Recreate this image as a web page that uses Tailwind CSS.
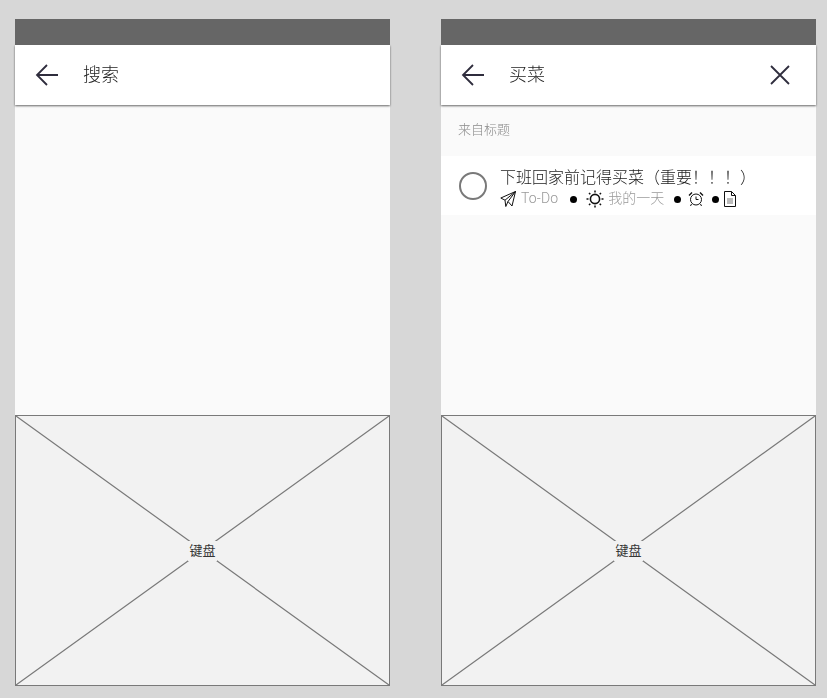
<!DOCTYPE html>
<html lang="zh">

<head>
    <meta charset="UTF-8">
    <meta name="viewport" content="width=device-width, initial-scale=1.0">
    <title>搜索</title>
    <script src="https://cdn.jsdelivr.net/npm/@tailwindcss/browser@4"></script>
</head>

<body class="bg-[#d7d7d7] h-[698px] overflow-hidden font-['Roboto','Noto_Sans_CJK_SC',sans-serif]">
    <main class="flex gap-[51px] pl-[15px] pt-[19px] opacity-[0.999]">
        <!-- left phone: empty search -->
        <section class="w-[375px] flex flex-col">
            <div class="relative z-10 h-[26px] bg-[#666666]"></div>
            <header class="relative h-[60px] bg-white shadow-[0_1px_2px_rgba(0,0,0,0.6)] flex items-center pl-[20px]">
                <svg class="w-[24px] h-[24px]" viewBox="0 0 24 24" fill="none" stroke="#2f2d3d" stroke-width="1.8">
                    <path d="M23 12H2M12 2 2 12l10 10" />
                </svg>
                <h1 class="ml-[24px] -mt-[2px] text-[18px] font-light text-[#222]">搜索</h1>
            </header>
            <div class="h-[310px] bg-[#fafafa]"></div>
            <div class="relative h-[271px] bg-[#f2f2f2] border border-[#797979]">
                <svg class="absolute inset-0 w-full h-full" viewBox="0 0 373 269" preserveAspectRatio="none" fill="none" stroke="#797979" stroke-width="1.200">
                    <path d="M0 0 373 269M373 0 0 269" />
                </svg>
                <div class="absolute inset-0 flex items-center justify-center opacity-[0.99]">
                    <span class="bg-[#f2f2f2] px-[1px] py-[2px] text-[13px] leading-[16px] text-[#333]">键盘</span>
                </div>
            </div>
        </section>

        <!-- right phone: search result -->
        <section class="w-[375px] flex flex-col">
            <div class="relative z-10 h-[26px] bg-[#666666]"></div>
            <header class="relative h-[60px] bg-white shadow-[0_1px_2px_rgba(0,0,0,0.6)] flex items-center pl-[20px] pr-[25px]">
                <svg class="w-[24px] h-[24px]" viewBox="0 0 24 24" fill="none" stroke="#2f2d3d" stroke-width="1.8">
                    <path d="M23 12H2M12 2 2 12l10 10" />
                </svg>
                <h1 class="ml-[24px] -mt-[2px] text-[18px] font-light text-[#222]">买菜</h1>
                <svg class="ml-auto w-[22px] h-[22px]" viewBox="0 0 22 22" fill="none" stroke="#2f2d3d" stroke-width="1.8">
                    <path d="M2 2 20 20M20 2 2 20" />
                </svg>
            </header>
            <div class="h-[310px] bg-[#fafafa]">
                <p class="h-[51px] pl-[17px] pt-[15px] text-[13px] leading-[20px] font-light text-[#8a8a8a]">来自标题</p>
                <div class="h-[59px] bg-white flex items-center pl-[18px]">
                    <div class="w-[28px] h-[28px] rounded-full border-2 border-[#797979]"></div>
                    <div class="ml-[13px] pt-[2px]">
                        <p class="text-[16px] leading-[22px] font-light text-[#222]">下班回家前记得买菜<span class="font-['Noto_Sans_CJK_TC',sans-serif]">（</span>重要<span class="font-['Noto_Sans_CJK_TC',sans-serif]">！！！）</span></p>
                        <div class="flex items-center h-[20px] text-[14px] font-light text-[#999]">
                            <svg class="w-[16px] h-[16px] mt-[1px]" viewBox="0 0 16 16" fill="none" stroke="#111" stroke-width="1">
                                <path d="M15.500 .5 .8 7l4.200 2.200L15.500 .5ZM15.500 .5 12 15 8 10.500M5 9.200 5.800 15.500 8 10.500M15.500 .5 8 10.500" />
                            </svg>
                            <span class="ml-[5px] tracking-[0.15px]">To-Do</span>
                            <span class="ml-[12px] mt-[1px] w-[7px] h-[7px] rounded-full bg-black"></span>
                            <svg class="ml-[9px] mt-[1px] w-[18px] h-[18px]" viewBox="0 0 18 18" fill="none" stroke="#111">
                                <circle cx="9" cy="9" r="4.600" stroke-width="1.600" />
                                <path stroke-width="1.500" d="M9 .5v2M9 15.500v2M.5 9h2M15.500 9h2M3 3l1.300 1.300M13.700 13.700 15 15M15 3l-1.300 1.300M4.300 13.700 3 15" />
                            </svg>
                            <span class="ml-[4px]">我的一天</span>
                            <span class="ml-[10px] mt-[1px] w-[7px] h-[7px] rounded-full bg-black"></span>
                            <svg class="ml-[7px] mt-[1px] w-[16px] h-[16px]" viewBox="0 0 16 16" fill="none" stroke="#111">
                                <circle cx="8" cy="8.500" r="5.500" />
                                <path d="M8 5.500v3h2.500M3.500 13 2.500 15M12.500 13l1 2" />
                                <path stroke-width="1.400" d="M1 4.500 4 1.500M15 4.500l-3-3" />
                            </svg>
                            <span class="ml-[8px] mt-[1px] w-[7px] h-[7px] rounded-full bg-black"></span>
                            <svg class="ml-[4px] mt-[1px] w-[14px] h-[16px]" viewBox="0 0 14 16" fill="none" stroke="#111">
                                <path d="M1.500 .5h7L12.500 4.500V15.500H1.500ZM8.500 .5v4H12.500" />
                                <path stroke="#777" d="M4 8h6M4 10h6M4 12h6" />
                            </svg>
                        </div>
                    </div>
                </div>
            </div>
            <div class="relative h-[271px] bg-[#f2f2f2] border border-[#797979]">
                <svg class="absolute inset-0 w-full h-full" viewBox="0 0 373 269" preserveAspectRatio="none" fill="none" stroke="#797979" stroke-width="1.200">
                    <path d="M0 0 373 269M373 0 0 269" />
                </svg>
                <div class="absolute inset-0 flex items-center justify-center opacity-[0.99]">
                    <span class="bg-[#f2f2f2] px-[1px] py-[2px] text-[13px] leading-[16px] text-[#333]">键盘</span>
                </div>
            </div>
        </section>
    </main>
</body>

</html>
